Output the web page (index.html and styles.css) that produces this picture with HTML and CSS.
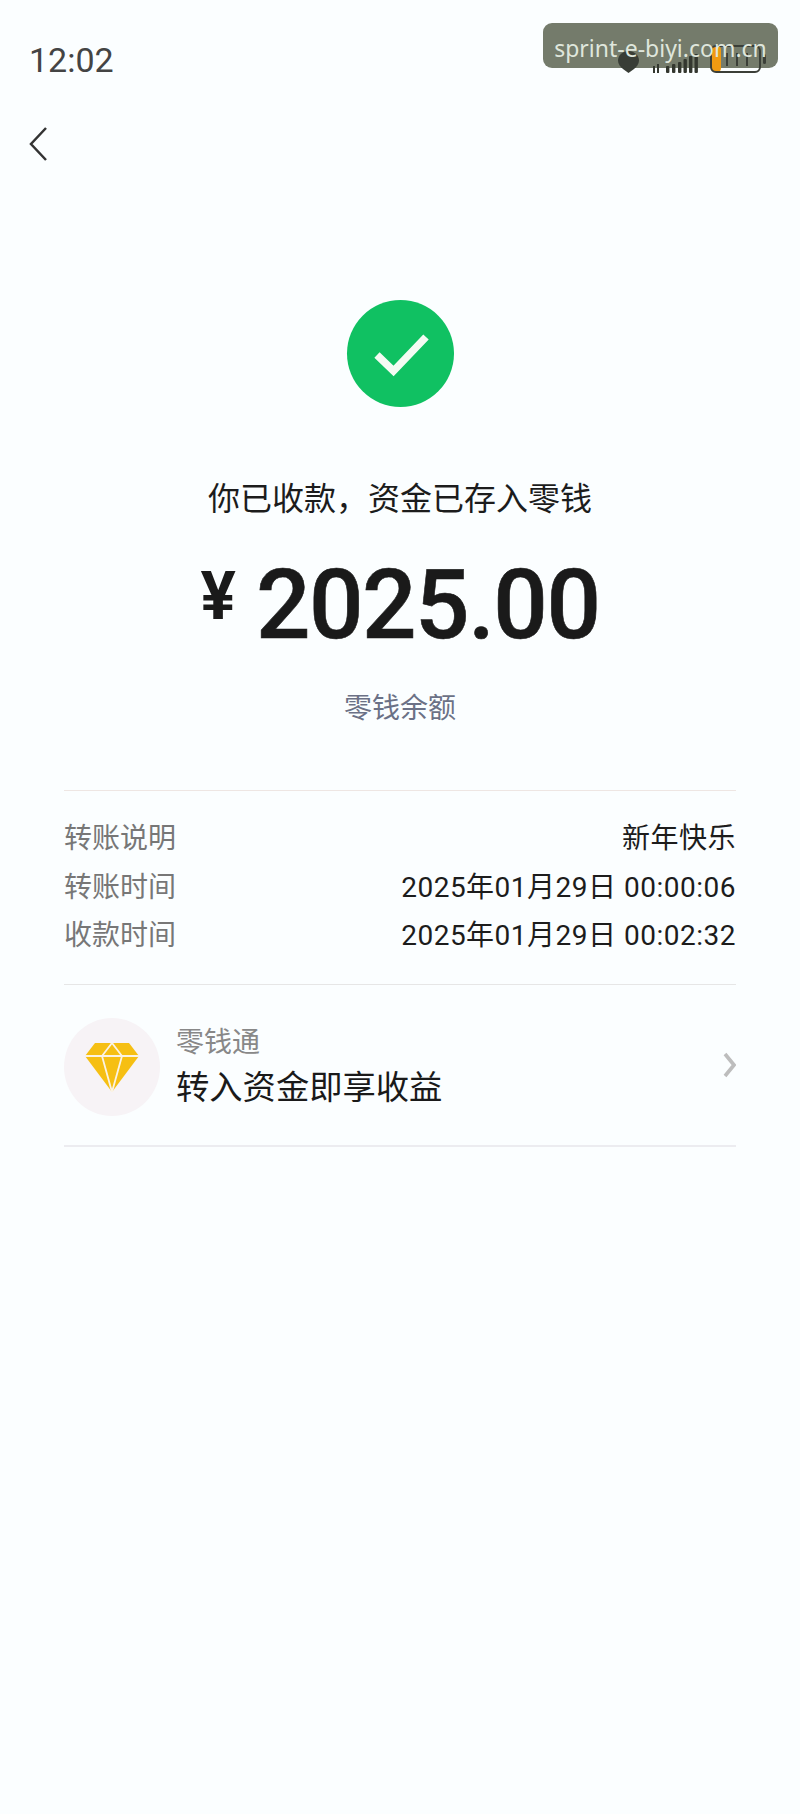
FILE: index.html
```html
<!DOCTYPE html>
<html lang="zh-CN">
<head>
<meta charset="utf-8">
<title>收款详情</title>
<link rel="stylesheet" href="styles.css">
</head>
<body>
<main class="page">
  <header class="status">
    <span class="clock">12:02</span>
    <div class="stamp-plate"></div>
    <div class="status-icons">
      <svg class="pin" width="21" height="22" viewBox="0 0 21 22"><path d="M10.500 0C4.700 0 0 4.300 0 9.600c0 3.600 2.400 6.400 5 8.400l5.500 4 5.500-4c2.600-2 5-4.800 5-8.400C21 4.300 16.300 0 10.500 0z" fill="#383d36"/></svg>
      <svg class="signal" width="45" height="19" viewBox="0 0 45 19" fill="#33372f">
        <rect x="0" y="12" width="2" height="7"/><rect x="4" y="10" width="2" height="9"/>
        <rect x="13" y="12" width="3.400" height="7" rx="1"/><rect x="19" y="10" width="3.400" height="9" rx="1"/>
        <rect x="25" y="8" width="3.400" height="11" rx="1"/><rect x="30.500" y="5" width="3.400" height="14" rx="1"/>
        <rect x="36" y="2" width="3.400" height="17" rx="1"/><rect x="41.500" y="0" width="3.400" height="19" rx="1"/>
      </svg>
      <svg class="battery" width="56" height="28" viewBox="0 0 56 28">
        <rect x="1" y="1" width="10" height="26" rx="4" fill="#f09a12"/>
        <rect x="1" y="1" width="49" height="26" rx="5" fill="none" stroke="#3b3f38" stroke-width="2"/>
        <path d="M17 8v13M27 8v13M37 8v13" stroke="#3b3f38" stroke-width="2"/>
        <rect x="53" y="9" width="3" height="10" rx="1.500" fill="#3b3f38"/>
      </svg>
    </div>
    <div class="stamp-text">sprint-e-biyi.com.cn</div>
  </header>

  <nav class="nav">
    <svg width="18" height="34" viewBox="0 0 18 34"><path d="M17 1 2 17l15 16" fill="none" stroke="#333" stroke-width="2.500"/></svg>
  </nav>

  <section class="result">
    <div class="tick">
      <svg width="107" height="107" viewBox="0 0 107 107"><path d="M30 55 46.500 71 79 37" fill="none" stroke="#f4fbf3" stroke-width="7.500"/></svg>
    </div>
    <h1 class="result-title">你已收款，资金已存入零钱</h1>
    <div class="amount"><span class="currency">¥</span><span class="figure">2025.00</span></div>
    <a class="balance">零钱余额</a>
  </section>

  <dl class="details">
    <div class="detail"><dt>转账说明</dt><dd>新年快乐</dd></div>
    <div class="detail"><dt>转账时间</dt><dd>2025年01月29日 00:00:06</dd></div>
    <div class="detail"><dt>收款时间</dt><dd>2025年01月29日 00:02:32</dd></div>
  </dl>

  <section class="promo">
    <div class="promo-badge">
      <svg width="54" height="49" viewBox="0 0 54 49">
        <path d="M10 0h34l10 13-27 36L0 13z" fill="#f6bf13"/>
        <path d="M0 13h54M17 13 27 0l10 13M17 13l10 36 10-36" fill="none" stroke="#fbf3e4" stroke-width="1.800"/>
      </svg>
    </div>
    <div class="promo-text">
      <span class="promo-name">零钱通</span>
      <span class="promo-offer">转入资金即享收益</span>
    </div>
    <svg class="promo-arrow" width="13" height="26" viewBox="0 0 13 26"><path d="M2 2l9 11-9 11" fill="none" stroke="#bdbdbd" stroke-width="3.600"/></svg>
  </section>
</main>
</body>
</html>
```

FILE: styles.css
```css
* { box-sizing: border-box; }

html, body {
  margin: 0;
  background: #fbfeff;
}

.page {
  width: 800px;
  height: 1814px;
  overflow: hidden;
  background: #fbfeff;
  color: #1a1a1a;
  font-family: "Noto Sans CJK SC", Roboto, sans-serif;
}

/* Status bar */
.status {
  position: relative;
  height: 120px;
  padding: 0 34px 0 29px;
  display: flex;
  justify-content: space-between;
  align-items: center;
}

.clock {
  font-family: Roboto, sans-serif;
  font-size: 34px;
  color: #444;
}

.status-icons {
  position: relative;
  margin-top: -2px;
  display: flex;
  align-items: flex-end;
  gap: 12px;
}

.pin { margin-right: 2px; }

.stamp-plate,
.stamp-text {
  position: absolute;
  top: 23px;
  right: 22px;
  width: 235px;
  height: 45px;
}

.stamp-plate {
  background: #747b6b;
  border-radius: 9px;
}

.stamp-text {
  font-family: "Noto Sans", sans-serif;
  font-size: 23px;
  line-height: 50px;
  text-align: center;
  color: #dfe6dc;
}

/* Back button */
.nav {
  padding: 7px 0 0 29px;
  height: 41px;
  line-height: 0;
}

/* Transfer result */
.result {
  display: flex;
  flex-direction: column;
  align-items: center;
}

.tick {
  margin-top: 139px;
  width: 107px;
  height: 107px;
  border-radius: 50%;
  background: #10c162;
  line-height: 0;
}

.result-title {
  margin: 69px 0 0;
  font-size: 32px;
  font-weight: 400;
  line-height: 40px;
  color: #1c1c1c;
}

.amount {
  margin-top: 39px;
  height: 100px;
  display: flex;
  align-items: flex-start;
  gap: 20px;
  font-family: Roboto, sans-serif;
  font-weight: 500;
  color: #1a1a1a;
}

.currency {
  margin-top: 4px;
  font-size: 66px;
  font-weight: 700;
  line-height: 76px;
}

.figure {
  font-size: 96px;
  line-height: 100px;
  letter-spacing: -1.500px;
  -webkit-text-stroke: 0.6px #1a1a1a;
}

.balance {
  margin-top: 31px;
  font-size: 28px;
  line-height: 40px;
  color: #6b7186;
}

/* Transfer details */
.details {
  margin: 64px 64px 0;
  padding: 21px 0 26px;
  border-top: 1.500px solid #eee6e3;
  border-bottom: 1.500px solid #e6e6e6;
}

.detail {
  height: 48.500px;
  display: flex;
  justify-content: space-between;
  align-items: center;
  font-size: 28px;
}

.detail dt { color: #777; }

.detail dd {
  margin: 0;
  font-family: Roboto, "Noto Sans CJK SC", sans-serif;
  letter-spacing: 0.5px;
  color: #1c1c1c;
}

/* Savings promotion */
.promo {
  margin: 0 64px;
  height: 162px;
  display: flex;
  align-items: center;
  border-bottom: 2px solid #ececf0;
}

.promo-badge {
  width: 96px;
  height: 98px;
  margin: 4px 16px 0 0;
  border-radius: 50%;
  background: #f7f3f6;
  display: flex;
  align-items: center;
  justify-content: center;
}

.promo-badge svg { margin-top: 2px; }

.promo-text {
  flex: 1;
  display: flex;
  flex-direction: column;
  gap: 3px;
}

.promo-name {
  font-size: 28px;
  line-height: 38px;
  color: #888;
}

.promo-offer {
  font-size: 33.300px;
  line-height: 46px;
  color: #1a1a1a;
}

.promo-arrow { margin-top: 0; }
```
